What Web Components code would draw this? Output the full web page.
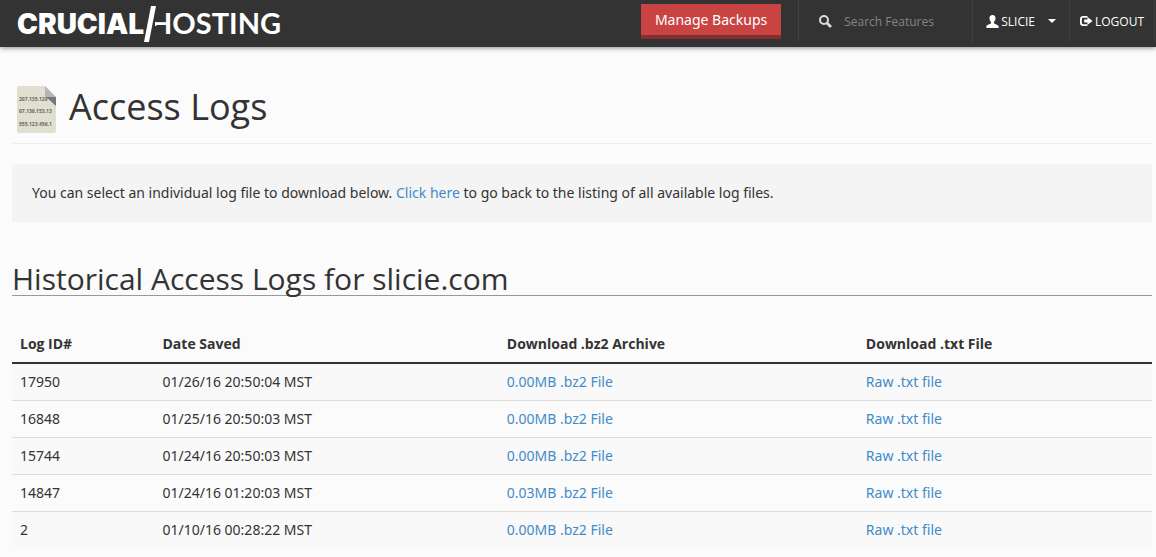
<!DOCTYPE html>
<html lang="en">
<head>
<meta charset="utf-8">
<meta name="viewport" content="width=device-width, initial-scale=1">
<title>Access Logs</title>
<style>
    body {
        margin: 0;
        background: #fbfbfb;
        color: #333;
        font: 14px/20px "Noto Sans", sans-serif;
    }
    main {
        padding: 0 4px 0 12px;
    }
</style>
</head>
<body>
<site-header user="SLICIE"></site-header>
<main>
    <page-title>Access Logs</page-title>
    <info-box>You can select an individual log file to download below. <text-link href="#logs">Click here</text-link> to go back to the listing of all available log files.</info-box>
    <log-table domain="slicie.com"></log-table>
</main>

<script>
class SiteHeader extends HTMLElement {
    constructor() {
        super();
        this.attachShadow({ mode: 'open' });
    }

    connectedCallback() {
        const user = this.getAttribute('user');

        this.shadowRoot.innerHTML = `
            <style>
                :host {
                    display: block;
                    background: #333;
                    border-bottom: 1px solid #2b3439;
                    box-shadow: 0 1px 5px rgba(0,0,0,0.45);
                    color: #fff;
                }
                header {
                    display: flex;
                    justify-content: space-between;
                    height: 46px;
                    padding: 0 1px 0 16px;
                }
                .logo svg {
                    display: block;
                }
                .logo text {
                    fill: #fff;
                    font-family: Lato, sans-serif;
                    font-size: 29px;
                }
                .logo .strong {
                    font-family: Inter, sans-serif;
                    font-size: 28px;
                }
                nav {
                    display: flex;
                }
                .backups {
                    align-self: flex-start;
                    height: 35px;
                    margin: 4px 17px 0 0;
                    padding: 0 14px;
                    border: 0;
                    border-bottom: 4px solid #842e2e;
                    background: #c94343;
                    color: #fff;
                    font: 14px "Noto Sans", sans-serif;
                    cursor: pointer;
                }
                .cell {
                    display: flex;
                    align-items: center;
                    box-sizing: border-box;
                    height: 42px;
                    border: 0;
                    border-left: 1px solid #404040;
                    background: none;
                    color: #fff;
                    font: 12px "Open Sans", sans-serif;
                    text-decoration: none;
                }
                .search {
                    gap: 12px;
                    padding: 0 12px 0 20px;
                }
                input {
                    width: 116px;
                    padding: 0;
                    border: 0;
                    outline: 0;
                    background: none;
                    color: #ddd;
                    font: inherit;
                }
                input::placeholder {
                    color: #858585;
                    opacity: 1;
                }
                .user {
                    gap: 2px;
                    padding: 0 13px;
                    cursor: pointer;
                }
                .caret {
                    margin-left: 11px;
                    border: 4px solid transparent;
                    border-top-color: #fff;
                    border-bottom: 0;
                }
                .logout {
                    gap: 2px;
                    padding: 0 10px;
                    border-right: 1px solid #404040;
                }
            </style>
            <header>
                <a class="logo" href="#" aria-label="Crucial Hosting">
                    <svg width="266" height="46" viewBox="0 0 266 46">
                        <text class="strong" x="1" y="34" font-weight="900">CRUCIAL</text>
                        <text x="134" y="34" font-weight="700">HOSTING</text>
                        <path fill="#333" d="M133 12h14v10h-14zM133 26h14v11h-14zM133 21h6v6h-6z"/>
                        <path fill="#fff" d="M135 6h5l-7 36h-5z"/>
                    </svg>
                </a>
                <nav>
                    <button class="backups" type="button">Manage Backups</button>
                    <label class="cell search">
                        <svg width="13" height="13" viewBox="0 0 13 13" fill="none" stroke="#ddd" aria-hidden="true">
                            <circle cx="5" cy="5" r="4" stroke-width="2"/>
                            <path d="M8 8l4 4" stroke-width="2.6"/>
                        </svg>
                        <input type="search" placeholder="Search Features" aria-label="Search Features">
                    </label>
                    <button class="cell user" type="button">
                        <svg width="13" height="13" viewBox="0 0 13 13" fill="#fff" aria-hidden="true">
                            <path d="M6.5 0C8.6 0 9.7 1.4 9.5 3.5 9.4 5 8.8 6.2 8 7v1.3c.5.8 4.6 1.5 4.6 3.2V13H.4v-1.5C.4 9.8 4.5 9.1 5 8.3V7C4.2 6.2 3.6 5 3.5 3.5 3.3 1.4 4.4 0 6.5 0z"/>
                        </svg>
                        ${user}
                        <span class="caret"></span>
                    </button>
                    <a class="cell logout" href="#logout">
                        <svg width="13" height="12" viewBox="0 0 14 12" aria-hidden="true">
                            <path d="M8 1.5H3.5Q1 1.5 1 4v4q0 2.5 2.500 2.500H8" fill="none" stroke="#fff" stroke-width="2"/>
                            <path d="M4.5 4.5H8V1.8L13.5 6 8 10.200V7.500H4.500z" fill="#fff"/>
                        </svg>
                        LOGOUT
                    </a>
                </nav>
            </header>
        `;
    }
}

class PageTitle extends HTMLElement {
    constructor() {
        super();
        this.attachShadow({ mode: 'open' });
        this.shadowRoot.innerHTML = `
            <style>
                :host {
                    display: flex;
                    align-items: center;
                    gap: 12px;
                    padding: 38px 0 9px 4px;
                    border-bottom: 1px solid #eee;
                }
                svg text {
                    fill: #666;
                    font: bold 5px "Noto Sans", sans-serif;
                }
                h1 {
                    margin: 0 0 6px;
                    font: 36px/40px "Open Sans", sans-serif;
                }
            </style>
            <svg width="41" height="49" viewBox="0 0 41 49" aria-hidden="true">
                <path fill="#e0dfd0" d="M3 1h26l11 12v33q0 2-2 2H3q-2 0-2-2V3q0-2 2-2z"/>
                <text x="3" y="16">207.135.129</text>
                <text x="3" y="28">67.136.153.13</text>
                <text x="3" y="41">555.123.456.1</text>
                <path fill="#77777b" d="M29 11l11 10v-9z"/>
                <path fill="#b5b5b8" d="M29 1l11 11H29z"/>
            </svg>
            <h1><slot></slot></h1>
        `;
    }
}

class InfoBox extends HTMLElement {
    constructor() {
        super();
        this.attachShadow({ mode: 'open' });
        this.shadowRoot.innerHTML = `
            <style>
                :host {
                    display: block;
                    margin-top: 20px;
                    padding: 19px 20px;
                    background: #f4f4f4;
                }
            </style>
            <slot></slot>
        `;
    }
}

class TextLink extends HTMLElement {
    constructor() {
        super();
        this.attachShadow({ mode: 'open' });
    }

    connectedCallback() {
        this.shadowRoot.innerHTML = `
            <style>
                :host { display: inline; }
                a { color: #428bca; text-decoration: none; }
                a:hover { text-decoration: underline; }
            </style>
            <a href="${this.getAttribute('href')}"><slot></slot></a>
        `;
    }
}

const logs = [
    { id: '17950', saved: '01/26/16 20:50:04 MST', size: '0.00MB' },
    { id: '16848', saved: '01/25/16 20:50:03 MST', size: '0.00MB' },
    { id: '15744', saved: '01/24/16 20:50:03 MST', size: '0.00MB' },
    { id: '14847', saved: '01/24/16 01:20:03 MST', size: '0.03MB' },
    { id: '2', saved: '01/10/16 00:28:22 MST', size: '0.00MB' }
];

class LogTable extends HTMLElement {
    constructor() {
        super();
        this.attachShadow({ mode: 'open' });
    }

    connectedCallback() {
        const rows = logs.map(log => `
            <tr>
                <td>${log.id}</td>
                <td>${log.saved}</td>
                <td><text-link href="#${log.id}.bz2">${log.size} .bz2 File</text-link></td>
                <td><text-link href="#${log.id}.txt">Raw .txt file</text-link></td>
            </tr>
        `).join('');

        this.shadowRoot.innerHTML = `
            <style>
                :host {
                    display: block;
                    margin-top: 41px;
                }
                h2 {
                    margin: 0 0 30px;
                    border-bottom: 1px solid #999;
                    font: 30px/32px "Open Sans", sans-serif;
                }
                table {
                    width: 100%;
                    border-collapse: separate;
                    border-spacing: 0;
                }
                .id { width: 12.5%; }
                .date { width: 30.2%; }
                .archive { width: 31.5%; }
                th, td {
                    box-sizing: border-box;
                    padding: 8px;
                    text-align: left;
                }
                th {
                    border-bottom: 2px solid #333;
                    font-family: "Open Sans", sans-serif;
                }
                td {
                    border-bottom: 1px solid #ddd;
                }
                tbody tr:last-child td {
                    border-bottom: 0;
                }
                tbody tr:nth-child(odd) {
                    background: #f9f9f9;
                }
            </style>
            <h2>Historical Access Logs for ${this.getAttribute('domain')}</h2>
            <table>
                <thead>
                    <tr>
                        <th class="id">Log ID#</th>
                        <th class="date">Date Saved</th>
                        <th class="archive">Download .bz2 Archive</th>
                        <th>Download .txt File</th>
                    </tr>
                </thead>
                <tbody>${rows}</tbody>
            </table>
        `;
    }
}

customElements.define('site-header', SiteHeader);
customElements.define('page-title', PageTitle);
customElements.define('info-box', InfoBox);
customElements.define('text-link', TextLink);
customElements.define('log-table', LogTable);
</script>
</body>
</html>
